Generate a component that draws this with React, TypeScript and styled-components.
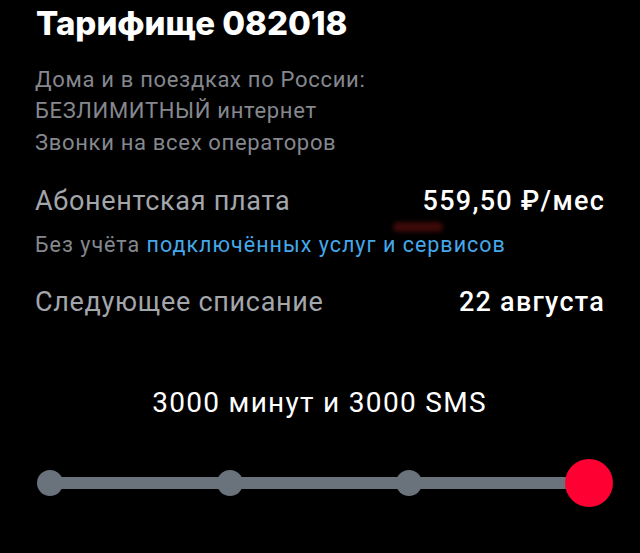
import React from "react";
import styled, { createGlobalStyle } from "styled-components";

const Global = createGlobalStyle`
  html, body { margin: 0; padding: 0; background: #000; }
  body { font-family: Roboto, "Noto Sans", sans-serif; color: #fff; }
`;

const Page = styled.div`
  position: relative;
  width: 640px;
  height: 553px;
  overflow: hidden;
  background: #000;
  padding: 0 36px 0 35px;
  box-sizing: border-box;
  display: flex;
  flex-direction: column;
`;

const Title = styled.h1`
  margin: 3px 0 0 1px;
  font-family: Inter, Roboto, sans-serif;
  font-weight: 800;
  font-size: 33px;
  line-height: 40px;
  letter-spacing: 0;
  color: #fff;
`;

const Description = styled.div`
  margin-top: 20.7px;
  font-size: 22px;
  line-height: 31.5px;
  letter-spacing: 0.68px;
  color: #85888e;
`;

const Row = styled.div<{ $top: number }>`
  margin-top: ${(p) => p.$top}px;
  display: flex;
  justify-content: space-between;
  align-items: baseline;
  font-size: 27px;
  line-height: 34px;
`;

const Label = styled.span`
  color: #a3a6ab;
  letter-spacing: 0.7px;
`;

const Value = styled.span`
  color: #fff;
  font-weight: 500;
  letter-spacing: 1.25px;
  margin-right: -1px;
`;

const Note = styled.div`
  margin-top: 13.7px;
  font-size: 21.5px;
  line-height: 28px;
  letter-spacing: 1px;
  color: #85888e;
`;

const Link = styled.span`
  color: #45a8ea;
`;

const Center = styled.div`
  margin-top: 67px;
  text-align: center;
  font-size: 28px;
  line-height: 34px;
  letter-spacing: 1.3px;
  color: #fff;
`;

const Slider = styled.div`
  position: relative;
  margin: 38.6px 15px 0 15px;
  height: 48px;
`;

const Track = styled.div`
  position: absolute;
  left: 0;
  right: 0;
  top: 18px;
  height: 12px;
  background: #6a727b;
`;

const Stops = styled.div`
  position: relative;
  height: 48px;
  display: flex;
  justify-content: space-between;
  align-items: center;
`;

const Stop = styled.div`
  width: 0;
  height: 48px;
  display: flex;
  justify-content: center;
  align-items: center;
`;

const Dot = styled.div<{ $active?: boolean }>`
  flex: none;
  width: ${(p) => (p.$active ? 48 : 26)}px;
  height: ${(p) => (p.$active ? 48 : 26)}px;
  border-radius: 50%;
  background: ${(p) => (p.$active ? "#ff0032" : "#6a727b")};
`;

const Smudge = styled.div`
  position: absolute;
  left: 393px;
  top: 222px;
  width: 50px;
  height: 10px;
  border-radius: 6px;
  background: #3d0909;
  filter: blur(2px);
`;

const stops = [false, false, false, true];

export default function App() {
  return (
    <>
      <Global />
      <Page>
        <Title>Тарифище 082018</Title>
        <Description>
          Дома и в поездках по России:
          <br />
          БЕЗЛИМИТНЫЙ интернет
          <br />
          Звонки на всех операторов
        </Description>
        <Row $top={25.5}>
          <Label>Абонентская плата</Label>
          <Value>559,50 ₽/мес</Value>
        </Row>
        <Note>
          Без учёта <Link>подключённых услуг и сервисов</Link>
        </Note>
        <Row $top={26}>
          <Label>Следующее списание</Label>
          <Value>22 августа</Value>
        </Row>
        <Center>3000 минут и 3000 SMS</Center>
        <Slider>
          <Track />
          <Stops>
            {stops.map((active, i) => (
              <Stop key={i}>
                <Dot $active={active} />
              </Stop>
            ))}
          </Stops>
        </Slider>
        <Smudge />
      </Page>
    </>
  );
}
